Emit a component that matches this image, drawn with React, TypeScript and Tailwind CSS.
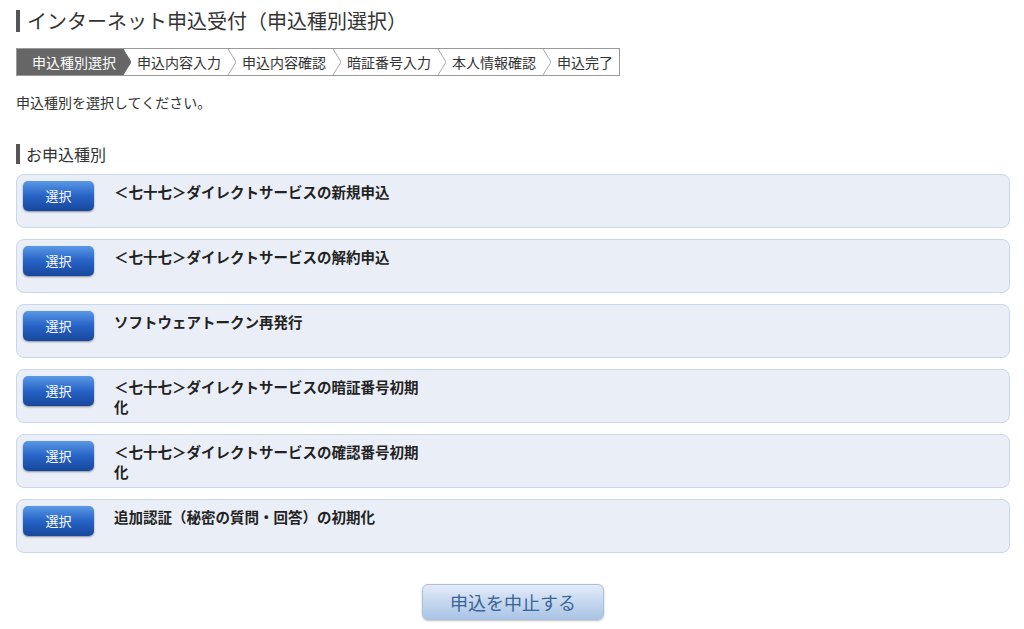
import React from "react";

const steps = ["申込種別選択", "申込内容入力", "申込内容確認", "暗証番号入力", "本人情報確認", "申込完了"];

const options = [
  "＜七十七＞ダイレクトサービスの新規申込",
  "＜七十七＞ダイレクトサービスの解約申込",
  "ソフトウェアトークン再発行",
  "＜七十七＞ダイレクトサービスの暗証番号初期化",
  "＜七十七＞ダイレクトサービスの確認番号初期化",
  "追加認証（秘密の質問・回答）の初期化",
];

function Chevron({ active }: { active?: boolean }) {
  return (
    <svg width="9" height="26" viewBox="0 0 9 26" className="shrink-0">
      {active && <polygon points="0,0 1,0 9,13 1,26 0,26" fill="#666666" />}
      <polyline points="1,0 9,13 1,26" fill="none" stroke={active ? "#666666" : "#aaaaaa"} strokeWidth="1" />
    </svg>
  );
}

export default function App() {
  return (
    <div
      className="w-[1024px] h-[629px] bg-white text-[#333] pl-4 pr-[14px] pt-[9px]"
      style={{ fontFamily: '"Noto Sans CJK JP", "Noto Sans", sans-serif' }}
    >
      {/* Title */}
      <div className="flex items-center gap-[7px] h-[24px]">
        <span className="w-[4px] h-[22px] bg-[#555]" />
        <h1 className="text-[20px] leading-[24px] text-[#333]">インターネット申込受付（申込種別選択）</h1>
      </div>

      {/* Steps */}
      <div className="mt-[15px] inline-flex border border-[#999] h-[28px] text-[14px] leading-[26px]">
        {steps.map((s, i) => (
          <div key={s} className="flex">
            <div
              className={
                i === 0
                  ? "bg-[#666] text-white pl-[15px] pr-[6px]"
                  : "text-[#333] pl-[6px] pr-[6px]"
              }
            >
              {s}
            </div>
            {i < steps.length - 1 && <Chevron active={i === 0} />}
          </div>
        ))}
      </div>

      <p className="mt-[16px] text-[14px] leading-[20px]">申込種別を選択してください。</p>

      {/* Section header */}
      <div className="mt-[31px] flex items-center gap-[6px] h-[22px]">
        <span className="w-[4px] h-[20px] bg-[#555]" />
        <h2 className="text-[16px] leading-[22px] text-[#333]">お申込種別</h2>
      </div>

      {/* Options */}
      <div className="mt-[9px] flex flex-col gap-[11px]">
        {options.map((o) => (
          <div
            key={o}
            className="h-[54px] rounded-[8px] border border-[#c9d7eb] bg-[#eaeff7] flex items-start pl-[6px] pt-[6px]"
          >
            <button className="w-[71px] h-[30px] shrink-0 rounded-[5px] bg-gradient-to-b from-[#5a98e6] via-[#2663c6] to-[#18479c] text-white text-[13px] shadow-[0_1px_2px_rgba(0,0,0,0.4)]">
              選択
            </button>
            <div className="ml-[20px] mt-[1px] w-[310px] font-bold text-[14.5px] leading-[20px] text-[#222]">{o}</div>
          </div>
        ))}
      </div>

      {/* Cancel */}
      <div className="mt-[31px] flex justify-center">
        <button className="w-[182px] h-[36px] rounded-[6px] border border-[#a9bfdc] bg-gradient-to-b from-[#e3ecf7] to-[#a9c4e6] text-[#3a6596] text-[18px] shadow-[0_1px_2px_rgba(0,0,0,0.25)]">
          申込を中止する
        </button>
      </div>
    </div>
  );
}
